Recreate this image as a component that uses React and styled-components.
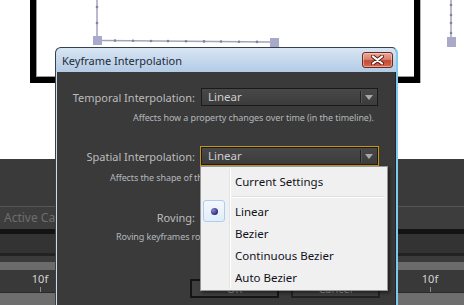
import React from 'react'
import styled, { createGlobalStyle } from 'styled-components'

const Global = createGlobalStyle`
  html, body {
    margin: 0;
    padding: 0;
    background: #fff;
  }
  body {
    width: 464px;
    height: 305px;
    overflow: hidden;
    font-family: "Noto Sans", "Liberation Sans", sans-serif;
  }
`

const Screen = styled.div`
  position: relative;
  width: 464px;
  height: 305px;
  overflow: hidden;
  background: #fff;
`

const CompArea = styled.div`
  height: 159px;
  background: #fff;
`

const CompRow = styled.div`
  display: flex;
  height: 83px;
`

const CompFrame = styled.div`
  margin-left: 30px;
  width: 390px;
  box-sizing: border-box;
  border: 6px solid #000;
  border-top: 0;
  background: #fff;
  box-shadow: inset 1px 0 0 #9a9a9a, inset 0 -1px 0 #9a9a9a;
`

const SideView = styled.div`
  flex: 1;
  border-left: 1px solid #b0b0b0;
`

const Strip = styled.div`
  height: ${p => p.h}px;
  background: ${p => p.bg};
  box-sizing: border-box;
  border-top: ${p => (p.line ? `1px solid ${p.line}` : '0')};
`

const TabRow = styled.div`
  height: 23px;
  box-sizing: border-box;
  background: #3d3d3d;
  border-top: 1px solid #555;
  padding-left: 4px;
  color: #6e6e6e;
  font-size: 12px;
  line-height: 22px;
`

const Ruler = styled.div`
  height: 22px;
  background: #393939;
  display: flex;
  justify-content: space-between;
  padding: 0 27px 0 33px;
  border-bottom: 1px solid #2a2a2a;
`

const Mark = styled.div`
  width: 14px;
  display: flex;
  flex-direction: column;
  align-items: center;
  color: #d4d4d4;
  font-size: 11px;
  line-height: 14px;
  padding-top: 2px;
  &::after {
    content: '';
    width: 1px;
    height: 5px;
    margin-top: 1px;
    background: #8a8a8a;
  }
`

const Dialog = styled.div`
  position: absolute;
  left: 55px;
  top: 47px;
  width: 343px;
  height: 280px;
  box-sizing: border-box;
  border: 1px solid #34404c;
  border-right: 2px solid #7ccbeb;
  border-radius: 6px 6px 0 0;
  background: #3a3a3a;
  display: flex;
  flex-direction: column;
  overflow: hidden;
`

const TitleBar = styled.div`
  height: 24px;
  flex: none;
  display: flex;
  align-items: center;
  justify-content: space-between;
  padding: 0 3px 0 6px;
  background: linear-gradient(#d8e5f3, #b3cbe6);
  border-left: 1px solid #edf3fa;
  margin-left: -1px;
  color: #1e2a36;
  font-size: 11px;
`

const CloseButton = styled.div`
  width: 31px;
  height: 16px;
  box-sizing: border-box;
  border: 1px solid #6e2a1f;
  border-radius: 3px;
  background: linear-gradient(#eba797 0%, #d9826f 45%, #c24a35 55%, #d26a52 100%);
  box-shadow: inset 0 0 0 1px rgba(255, 220, 210, 0.5);
  display: flex;
  align-items: center;
  justify-content: center;
`

const Body = styled.div`
  flex: 1;
  border-left: 1px solid #cfdbe8;
  border-right: 1px solid #262626;
  padding-top: 16px;
  display: flex;
  flex-direction: column;
  font-size: 11px;
`

const FieldRow = styled.div`
  display: grid;
  grid-template-columns: 138px 177px;
  column-gap: 6px;
  align-items: center;
  height: 18px;
  margin-top: ${p => p.gap || 0}px;
`

const Label = styled.div`
  text-align: right;
  color: #bcbcbc;
  white-space: nowrap;
`

const Select = styled.div`
  height: 18px;
  box-sizing: border-box;
  display: flex;
  align-items: stretch;
  border: 1px solid #1a1a1a;
  outline: ${p => (p.focused ? '1px solid #c8950e' : 'none')};
  background: linear-gradient(#484848, #3c3c3c);
  color: #cdcdcd;
  font-size: 11.5px;
`

const SelectValue = styled.div`
  flex: 1;
  padding-left: 6px;
  line-height: 16px;
`

const SelectArrow = styled.div`
  width: 16px;
  display: flex;
  align-items: center;
  justify-content: center;
  border-left: 1px solid #222;
  box-shadow: inset 1px 0 0 #555;
  margin: 2px 0;
  &::after {
    content: '';
    border-left: 4px solid transparent;
    border-right: 4px solid transparent;
    border-top: 5px solid #a8a8a8;
  }
`

const Desc = styled.div`
  margin-left: ${p => p.indent}px;
  margin-top: ${p => p.gap}px;
  font-size: 9px;
  letter-spacing: -0.1px;
  line-height: 12px;
  color: #b3b7bb;
  white-space: nowrap;
`

const ButtonRow = styled.div`
  display: flex;
  gap: 12px;
  padding-left: 133px;
  margin-top: 36px;
`

const Button = styled.div`
  width: 89px;
  height: 19px;
  box-sizing: border-box;
  border: 2px solid ${p => (p.primary ? '#151515' : '#222')};
  background: #3f3f3f;
  color: #9a9a9a;
  text-align: center;
  line-height: 15px;
`

const Menu = styled.div`
  position: absolute;
  left: 200px;
  top: 166px;
  width: 188px;
  height: 125px;
  box-sizing: border-box;
  border: 1px solid #979797;
  background: #f0f0f0;
  box-shadow: 2px 2px 3px rgba(0, 0, 0, 0.45);
  padding: 3px 0 2px;
  font-size: 11.5px;
  &::before {
    content: '';
    position: absolute;
    top: 2px;
    bottom: 2px;
    left: 28px;
    width: 1px;
    background: #e2e3e3;
    box-shadow: 1px 0 0 #fff;
  }
`

const MenuItem = styled.div`
  position: relative;
  height: 22px;
  display: flex;
  align-items: center;
  color: #101020;
`

const CheckSlot = styled.div`
  width: 22px;
  height: 22px;
  margin-left: 2px;
  box-sizing: border-box;
  display: flex;
  align-items: center;
  justify-content: center;
  border-radius: 3px;
  border: 1px solid ${p => (p.checked ? '#a9cdf5' : 'transparent')};
  background: ${p => (p.checked ? 'linear-gradient(#f4f8fd, #e2edf9)' : 'transparent')};
`

const Bullet = styled.div`
  width: 7px;
  height: 7px;
  border-radius: 50%;
  background: radial-gradient(circle at 35% 35%, #8a8ad8, #2a2a78 70%);
`

const ItemText = styled.span`
  margin-left: 10px;
`

const MenuSep = styled.div`
  height: 8px;
  display: flex;
  align-items: center;
  padding-left: 31px;
  padding-right: 3px;
  &::after {
    content: '';
    flex: 1;
    height: 1px;
    background: #e0e0e0;
    box-shadow: 0 1px 0 #fff;
  }
`

const PathStroke = '#a3a3bd'
const Key = '#a9a9c9'

const CompPath = () => (
  <svg width="378" height="77" viewBox="0 0 378 77">
    <line x1="61" y1="0" x2="61" y2="40" stroke={PathStroke} strokeWidth="1.5" />
    {[7, 23].map(y => (
      <circle key={y} cx="61" cy={y} r="1.3" fill="#8080a0" />
    ))}
    <line x1="66" y1="40.5" x2="234" y2="42" stroke={PathStroke} strokeWidth="1.5" />
    {[79, 97, 115, 132, 150, 168, 185, 203, 221].map(x => (
      <circle key={x} cx={x} cy={40.5 + (x - 66) * 0.009} r="1.3" fill="#8080a0" />
    ))}
    <rect x="57" y="36" width="9" height="9" fill={Key} />
    <rect x="234" y="38" width="9" height="9" fill={Key} />
  </svg>
)

const SidePath = () => (
  <svg width="43" height="83" viewBox="0 0 43 83">
    <line x1="30" y1="0" x2="30" y2="38" stroke={PathStroke} strokeWidth="1.5" />
    {[5, 15, 23, 33].map(y => (
      <circle key={y} cx="30" cy={y} r="1.3" fill="#8080a0" />
    ))}
    <rect x="26" y="37" width="9" height="10" fill={Key} />
  </svg>
)

const CloseGlyph = () => (
  <svg width="13" height="10" viewBox="0 0 13 10">
    <path d="M2 1.5 L11 8.5 M11 1.5 L2 8.5" stroke="#5a1f17" strokeWidth="4" strokeLinecap="round" />
    <path d="M2 1.5 L11 8.5 M11 1.5 L2 8.5" stroke="#fff" strokeWidth="2.2" strokeLinecap="round" />
  </svg>
)

const menuItems = ['Linear', 'Bezier', 'Continuous Bezier', 'Auto Bezier']

export default function App() {
  return (
    <Screen>
      <Global />
      <CompArea>
        <CompRow>
          <CompFrame>
            <CompPath />
          </CompFrame>
          <SideView>
            <SidePath />
          </SideView>
        </CompRow>
      </CompArea>
      <Strip h={47} bg="#3a3a3a" />
      <TabRow>Active Camera</TabRow>
      <Strip h={5} bg="#131313" />
      <Strip h={19} bg="#333" />
      <Strip h={3} bg="#222" />
      <Strip h={6} bg="#3b3b3b" />
      <Strip h={8} bg="#6b6b6b" />
      <Ruler>
        <Mark>10f</Mark>
        <Mark>10f</Mark>
      </Ruler>
      <Strip h={20} bg="#6e6e6e" />

      <Dialog>
        <TitleBar>
          <span>Keyframe Interpolation</span>
          <CloseButton>
            <CloseGlyph />
          </CloseButton>
        </TitleBar>
        <Body>
          <FieldRow>
            <Label>Temporal Interpolation:</Label>
            <Select>
              <SelectValue>Linear</SelectValue>
              <SelectArrow />
            </Select>
          </FieldRow>
          <Desc indent={76} gap={6}>Affects how a property changes over time (in the timeline).</Desc>
          <FieldRow gap={23}>
            <Label>Spatial Interpolation:</Label>
            <Select focused>
              <SelectValue>Linear</SelectValue>
              <SelectArrow />
            </Select>
          </FieldRow>
          <Desc indent={53} gap={7}>Affects the shape of the path (in the Composition panel).</Desc>
          <FieldRow gap={24}>
            <Label>Roving:</Label>
            <span />
          </FieldRow>
          <Desc indent={59} gap={5}>Roving keyframes rove in time to smooth out speed changes.</Desc>
          <ButtonRow>
            <Button primary>OK</Button>
            <Button>Cancel</Button>
          </ButtonRow>
        </Body>
      </Dialog>

      <Menu>
        <MenuItem>
          <CheckSlot />
          <ItemText>Current Settings</ItemText>
        </MenuItem>
        <MenuSep />
        {menuItems.map((item, i) => (
          <MenuItem key={item}>
            <CheckSlot checked={i === 0}>{i === 0 && <Bullet />}</CheckSlot>
            <ItemText>{item}</ItemText>
          </MenuItem>
        ))}
      </Menu>
    </Screen>
  )
}
